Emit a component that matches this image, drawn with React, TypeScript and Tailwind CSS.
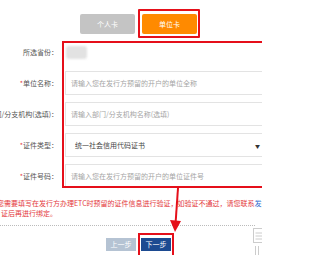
export default function App() {
  const rows = [
    { label: '单位名称：', req: true, ph: '请输入您在发行方预留的开户的单位全称' },
    { label: '部门/分支机构(选填)：', req: false, ph: '请输入部门/分支机构名称(选填)' },
  ];

  return (
    <div className="relative w-[262px] h-[255px] overflow-hidden bg-white font-['Noto_Sans_CJK_SC','Noto_Sans',sans-serif] text-[7px] leading-none">
      {/* tabs */}
      <div className="flex gap-[7px] pl-[80px] pt-[14px]">
        <button className="w-[55px] h-[20px] rounded-[2px] bg-[#c4c4c4] text-white">个人卡</button>
        <button className="w-[55px] h-[20px] rounded-[2px] bg-[#ff8a00] text-white">单位卡</button>
      </div>

      {/* form */}
      <div className="mt-[6px] w-[266px] grid grid-cols-[58px_1fr] gap-x-[7px] gap-y-[7px]">
        <div className="flex justify-end items-center h-[24px] whitespace-nowrap text-[#555]">所选省份：</div>
        <div className="flex items-center h-[24px]">
          <div className="w-[21px] h-[13px] ml-[1px] rounded-[3px] bg-[#e2e2e2] blur-[1px]" />
        </div>

        {rows.map((r) => (
          <>
            <div key={r.label} className="flex justify-end items-center h-[24px] whitespace-nowrap text-[#555]">
              {r.req && <span className="text-[#e4393c]">*</span>}
              {r.label}
            </div>
            <div className="flex items-center h-[24px] border border-[#e3e3e3] pl-[5px] text-[#a5a5a5] whitespace-nowrap">
              {r.ph}
            </div>
          </>
        ))}

        <div className="flex justify-end items-center h-[24px] whitespace-nowrap text-[#555]">
          <span className="text-[#e4393c]">*</span>证件类型：
        </div>
        <div className="flex items-center justify-between h-[24px] border border-[#e3e3e3] pl-[9px] pr-[5px] text-[#444] whitespace-nowrap">
          <span>统一社会信用代码证书</span>
          <span className="text-[5px] text-[#333]">▼</span>
        </div>

        <div className="flex justify-end items-center h-[24px] whitespace-nowrap text-[#555]">
          <span className="text-[#e4393c]">*</span>证件号码：
        </div>
        <div className="flex items-center h-[24px] border border-[#e3e3e3] pl-[5px] text-[#a5a5a5] whitespace-nowrap">
          请输入您在发行方预留的开户的单位证件号
        </div>
      </div>

      {/* notice */}
      <div className="mt-[10px] text-[#e4393c] leading-[10px] whitespace-nowrap">
        <div className="ml-[-3px]">
          您需要填写在发行方办理ETC时预留的证件信息进行验证，如验证不通过，请您联系<span className="text-[#2d6bd0]">发行方</span>
        </div>
        <div className="ml-[1px]">证后再进行绑定。</div>
      </div>

      <div className="mt-[7px] w-[255px] border-t border-dotted border-[#bbb]" />

      {/* steps */}
      <div className="mt-[12px] flex gap-[5px] pl-[106px]">
        <button className="w-[30px] h-[13px] bg-[#b5c3d3] text-white">上一步</button>
        <button className="w-[30px] h-[13px] bg-[#1c4a91] text-white">下一步</button>
      </div>

      {/* annotations */}
      <div className="absolute left-[138px] top-[9px] w-[62px] h-[29px] border-2 border-[#e50f1a] rounded-[1px]" />
      <div className="absolute left-[62px] top-[41px] w-[220px] h-[147px] border-2 border-[#e50f1a]" />
      <div className="absolute left-[138px] top-[233px] w-[36px] h-[30px] border-2 border-[#e50f1a]" />
      <svg className="absolute left-[166px] top-[186px]" width="20" height="48" viewBox="0 0 20 48">
        <line x1="12" y1="2" x2="9.5" y2="38" stroke="#e50f1a" strokeWidth="2" />
        <polygon points="4,34 15,35 9,46" fill="#e50f1a" />
      </svg>

      {/* side tools */}
      <svg className="absolute left-[253px] top-[228px]" width="9" height="27" viewBox="0 0 9 27">
        <rect x="0.5" y="0.5" width="10" height="14" fill="#fff" stroke="#ccc" />
        <line x1="2.5" y1="5" x2="9" y2="5" stroke="#ccc" />
        <line x1="2.5" y1="8" x2="9" y2="8" stroke="#ccc" />
        <line x1="2.5" y1="11" x2="9" y2="11" stroke="#ccc" />
        <line x1="2.5" y1="18" x2="2.5" y2="27" stroke="#ccc" />
        <line x1="5.5" y1="18" x2="5.5" y2="27" stroke="#ccc" />
      </svg>
    </div>
  );
}
